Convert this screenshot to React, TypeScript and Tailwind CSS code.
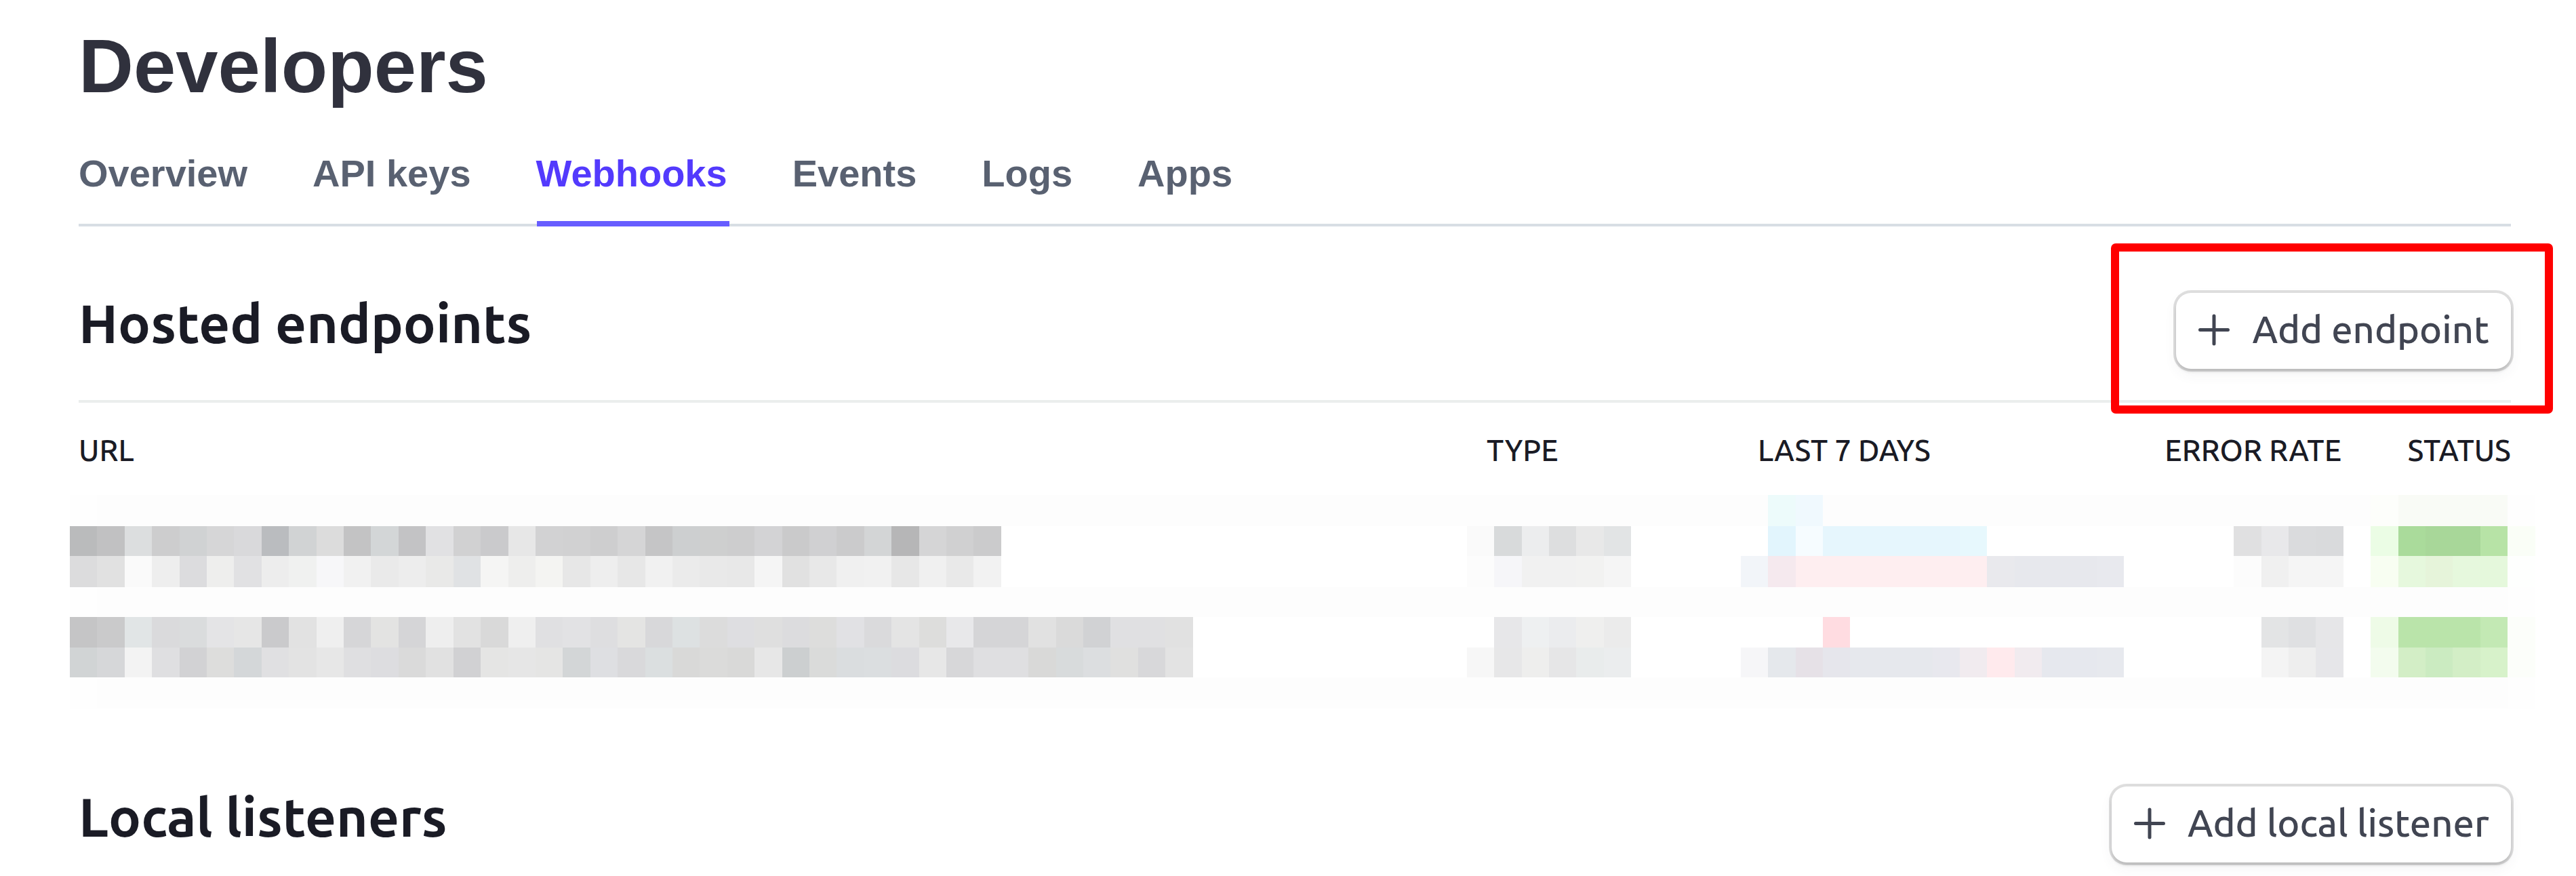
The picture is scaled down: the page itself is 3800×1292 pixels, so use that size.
type Run = [start: number, colors: string];

const TABS = [
  { label: "Overview" },
  { label: "API keys" },
  { label: "Webhooks", active: true },
  { label: "Events" },
  { label: "Logs" },
  { label: "Apps" },
];

// Pixelated endpoint rows: each strip lists runs of cells by their starting column.
const MOSAIC: { height: number; band: boolean; runs: Run[] }[] = [
  {
    height: 46,
    band: true,
    runs: [
      [62, "edfbfb f0f9fe"],
      [84, "fdfefb f9fbf6 f9fbf6 f9fbf6 f9fbf6"],
    ],
  },
  {
    height: 44,
    band: false,
    runs: [
      [0, "babbbc c1c1c2 dcdedf cdcdce d0d2d3 d6d6d7 d9d9db babcbf d1d3d4 dcdcdc c3c3c4 d3d6d7 c3c3c5 e1e1e3 d1d1d2 cacacc e7e7e7 d2d2d3 d1d1d2 cececf d5d5d6 c5c5c6 cdcfd0 cecfcf cdcdce d3d3d5 cacacb d0d0d2 cbcbcc d3d5d6 b6b6b7 d5d5d6 d0d0d1 cbcbcc"],
      [51, "fafafa d8dadb ecedee dddedf e8e8e8 e2e4e5"],
      [62, "e2f5fd f6fcff e6f6fd e6f6fd e6f6fd e6f6fd e6f6fd e7f8fd"],
      [79, "e0e0e1 e8e8ea dadbdd d9dadc"],
      [84, "ebfde5 aadb9b a8d799 a8d799 b7e3a6 fafef7"],
    ],
  },
  {
    height: 46,
    band: false,
    runs: [
      [0, "dcdcdd e1e1e1 fafafa eeeeee dcdcde eeeeed e1e1e3 ededed f0f1f0 f7f7f9 f1f1f1 eaeaea ededed e9e9e8 e0e2e4 f5f5f4 eeeeed f4f4f2 e7e7e7 eeeeee e7e7e7 f1f1f1 ebebeb e9e9e9 e8e8e8 f5f5f5 e1e1e1 e8e8e8 f0f0f0 f1f1f1 e7e7e7 f0f0f0 e9e9e9 f2f2f2"],
      [51, "fcfcfc f6f6f9 f1f1f1 f1f1f1 f2f2f1 f5f5f5"],
      [61, "f2f5f9 f5e9ee feeef0 feeef0 feeef0 feeef0 feeef0 feeef0 feeef0 e9e9ed e7e8ed e7e8ed e7e8ed e8e9ee"],
      [79, "fcfcfc f0f0f0 f5f5f5 f5f5f5"],
      [84, "f8fef2 e6f8dd e6f4da e6f8dd e5f8dc fefffe"],
    ],
  },
  { height: 44, band: true, runs: [] },
  {
    height: 45,
    band: false,
    runs: [
      [0, "c5c5c6 cacacb e1e5e6 dadadc dadcdd e4e4e6 e6e6e6 cacacc e2e2e2 efefef d6d6d8 e3e3e2 d5d5d7 eeeeee e2e2e2 d9d9d9 efefef e0e0e2 e2e2e4 dedee0 e4e4e3 d8d8da dde1e2 dcdcdc dedee1 dfdfdf dcdcde dddddc e1e1e4 dadadc e4e4e4 dddddc e8e8ea d5d5d7 d5d5d7 e1e1e1 dadada d1d2d4 e0e0e2 e0e0e2 e1e1e1"],
      [52, "e7e7e9 eef0f1 ebecee efefee ebebeb"],
      [64, "ffdce1"],
      [80, "e3e4e5 dfe0e2 e6e6e8"],
      [84, "eefbe7 bae4aa bae4aa bae4aa c3e9b4 fcfefa"],
    ],
  },
  {
    height: 44,
    band: false,
    runs: [
      [0, "d1d4d5 d6d7d9 f3f3f3 dfdfe1 d2d2d4 dddddc d4d7d9 e0e0e2 e3e3e3 e7e7e7 dfdfe1 dddde0 dadada e1e1e1 d1d1d3 e5e5e4 e6e6e6 e5e5e4 d3d6d7 dedfe2 d9d9db dbdfe0 d9d9d8 dbdbda d9d9d8 e7e7e7 cccfd0 dadbda dadddf dbdee0 dcdcdf e7e7e7 d7d7d9 dfdfe1 dfdfe1 d9d9d8 d8dbdc dcdee0 e0e0df d8d8da e3e3e3"],
      [51, "f7f7f7 e7e7e8 eeeeed e6e6e7 e9ecec ebedee"],
      [61, "f6f6f8 e5e8ec e6e1e7 e6e6ec e6e8ed e6e8ed e6e8ed e8e8ee f1ebef ffeaed f1ebef e6e8ee e6e8ee e7e9ee"],
      [80, "f4f4f4 eeeeee e6e6e9"],
      [84, "f3fcee d3eec6 cbebc1 d3eec6 d7f2ca fcfefa"],
    ],
  },
  { height: 46, band: true, runs: [] },
];

const COLUMNS = 90;

function toCells(runs: Run[], band: boolean) {
  const cells: string[] = Array.from({ length: COLUMNS }, (_, i) => {
    if (!band) return "transparent";
    return i === 0 || i === COLUMNS - 1 ? "#fefefe" : "#fdfdfd";
  });
  for (const [start, colors] of runs) {
    colors.split(" ").forEach((c, i) => {
      cells[start + i] = `#${c}`;
    });
  }
  return cells;
}

function Mosaic() {
  return (
    <div className="-ml-[13px] mt-[45px] w-[3637px]" aria-hidden="true">
      {MOSAIC.map((strip, i) => (
        <div key={i} className="flex" style={{ height: strip.height }}>
          {toCells(strip.runs, strip.band).map((color, j) => (
            <div key={j} className="flex-1" style={{ backgroundColor: color }} />
          ))}
        </div>
      ))}
    </div>
  );
}

function AddButton({ label }: { label: string }) {
  return (
    <button className="flex h-28 items-center gap-8 rounded-[22px] bg-white px-8 text-[56px] leading-none font-medium text-[#414552] shadow-[0_0_0_4px_rgba(0,0,0,0.125),0_4px_4px_rgba(0,0,0,0.13),0_8px_20px_rgba(60,66,87,0.06)]">
      <svg viewBox="0 0 48 48" className="-mt-1 size-12" fill="none" stroke="currentColor" strokeWidth="5" strokeLinecap="round">
        <path d="M24 4v41M3.5 24.5h41" />
      </svg>
      <span className="-mt-1">{label}</span>
    </button>
  );
}

function SectionTitle({ title, action }: { title: string; action: string }) {
  return (
    <div className="flex items-start justify-between">
      <h2 className="mt-1 text-[80px] leading-none font-semibold text-[#1a1b25]">{title}</h2>
      <AddButton label={action} />
    </div>
  );
}

export default function App() {
  return (
    <main className="relative h-[1292px] w-[3800px] overflow-hidden bg-white pt-[42px] pr-24 pl-[116px] font-['Ubuntu','Noto_Sans',sans-serif]">
      <h1 className="font-['Liberation_Sans',sans-serif] text-[112px] leading-none font-bold text-[#30313d]">
        Developers
      </h1>

      <nav className="mt-[74px] flex h-[106px] gap-24 font-['Liberation_Sans',sans-serif] text-[56px] leading-none font-bold text-[#596171] shadow-[inset_0_-4px_0_#d8dee4]">
        {TABS.map((tab) => (
          <a
            key={tab.label}
            className={
              tab.active
                ? "relative h-full text-[#533afd] after:absolute after:bottom-0 after:left-px after:h-2 after:w-[284px] after:bg-[#675dff]"
                : "h-full"
            }
          >
            {tab.label}
          </a>
        ))}
      </nav>

      <section className="mt-[98px]">
        <SectionTitle title="Hosted endpoints" action="Add endpoint" />
        <div className="mt-[46px] grid h-[95px] grid-cols-[2077px_400px_431px_430px_250px] border-t-4 border-[#ebeeed] pt-[48px] text-[44px] leading-none font-medium text-[#1a1b25]">
          <span>URL</span>
          <span>TYPE</span>
          <span className="tracking-[-0.15px]">LAST 7 DAYS</span>
          <span className="text-right">ERROR RATE</span>
          <span className="text-right">STATUS</span>
        </div>
        <Mosaic />
      </section>

      <section className="mt-[115px]">
        <SectionTitle title="Local listeners" action="Add local listener" />
      </section>

      <div className="absolute top-[359px] left-[3114px] h-[251px] w-[652px] rounded-[7px] border-12 border-[#ff0000]" />
    </main>
  );
}
